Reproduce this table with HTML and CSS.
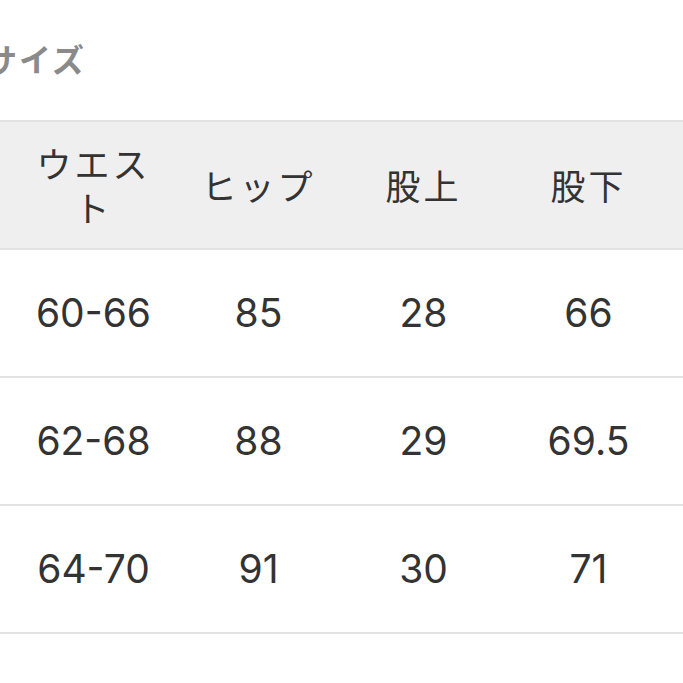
FILE: index.html
```html
<!DOCTYPE html>
<html lang="ja">
<head>
<meta charset="utf-8">
<link rel="stylesheet" href="styles.css">
</head>
<body>
<div class="title">サイズ</div>
<div class="table">
  <div class="row head">
    <div class="cell">ウエスト</div>
    <div class="cell">ヒップ</div>
    <div class="cell">股上</div>
    <div class="cell">股下</div>
  </div>
  <div class="row">
    <div class="cell num">60-66</div>
    <div class="cell num">85</div>
    <div class="cell num">28</div>
    <div class="cell num">66</div>
  </div>
  <div class="row">
    <div class="cell num">62-68</div>
    <div class="cell num">88</div>
    <div class="cell num">29</div>
    <div class="cell num">69.5</div>
  </div>
  <div class="row">
    <div class="cell num">64-70</div>
    <div class="cell num">91</div>
    <div class="cell num">30</div>
    <div class="cell num">71</div>
  </div>
</div>
</body>
</html>
```
FILE: styles.css
```css
html, body {
  margin: 0;
  padding: 0;
  background: #ffffff;
}
body {
  font-family: "Inter", "Liberation Sans", "Noto Sans CJK JP", sans-serif;
  color: #333333;
  width: 683px;
  height: 683px;
  overflow: hidden;
}
.title {
  font-family: "Noto Sans CJK JP", sans-serif;
  font-weight: 700;
  font-size: 32px;
  line-height: 40px;
  letter-spacing: 2px;
  color: #8a8a8a;
  padding-top: 38px;
  margin-left: -15px;
  height: 40px;
  margin-bottom: 42px;
  white-space: nowrap;
}
.table {
  border-top: 2px solid #e2e2e2;
}
.row {
  display: grid;
  grid-template-columns: repeat(4, 165px);
  padding: 0 11px;
  height: 126px;
  border-bottom: 2px solid #e2e2e2;
  align-items: center;
}
.row.head {
  background: #efefef;
}
.cell {
  text-align: center;
  padding: 0 14px;
}
.head .cell {
  font-family: "Noto Sans CJK JP", sans-serif;
  font-size: 35px;
  line-height: 44px;
  letter-spacing: 3px;
  color: #333333;
}
.num {
  font-size: 39px;
  line-height: 44px;
  color: #333333;
}
```
